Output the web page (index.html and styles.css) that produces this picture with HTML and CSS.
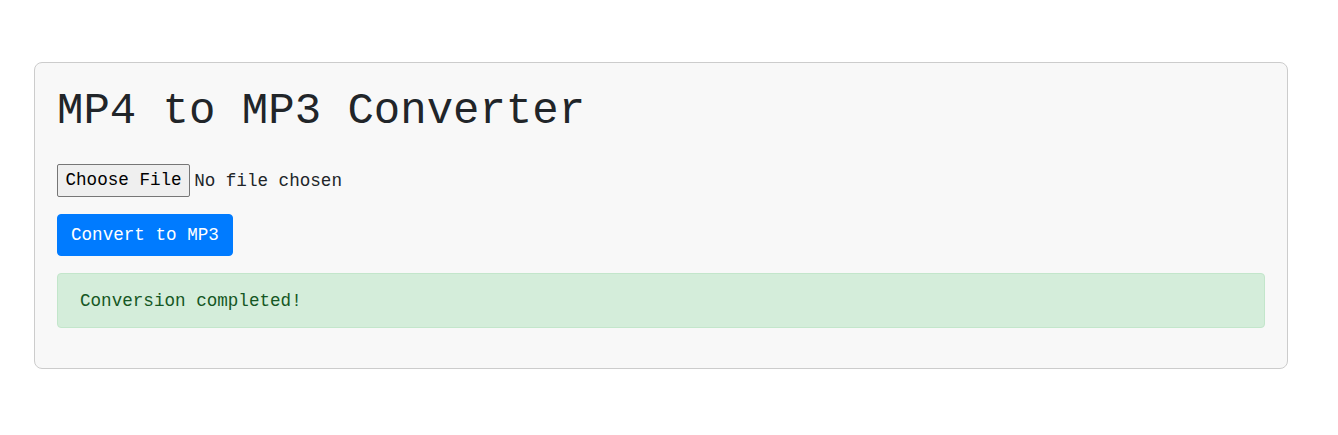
FILE: index.html
```html
<!DOCTYPE html>
<html lang="en">
<head>
<meta charset="utf-8">
<title>MP4 to MP3 Converter</title>
<link rel="stylesheet" href="styles.css">
</head>
<body>
<div class="page">
  <div class="card">
    <h1 class="title">MP4 to MP3 Converter</h1>
    <form class="form">
      <div class="file-row"><input type="file" class="file-input" accept="video/mp4"></div>
      <button type="button" class="btn-primary">Convert to MP3</button>
    </form>
    <div class="alert-success">Conversion completed!</div>
  </div>
</div>
</body>
</html>
```
FILE: styles.css
```css
html, body {
  margin: 0;
  padding: 0;
  background: #ffffff;
}
body {
  font-family: "Liberation Mono", "Courier New", monospace;
  font-size: 17.6px;
  color: #212529;
}
.page {
  padding: 62px 0 0 34px;
}
.card {
  width: 1254px;
  box-sizing: border-box;
  background: #f8f8f8;
  border: 1px solid #cccccc;
  border-radius: 8px;
  padding: 22px 22px 22px 22px;
}
.title {
  font-family: "Liberation Mono", "Courier New", monospace;
  font-weight: 400;
  font-size: 44px;
  line-height: 1.2;
  margin: 0 0 8px 0;
}
.form {
  margin: 0;
}
.file-row {
  padding-top: 18px;
  margin-bottom: 17px;
  height: 33px;
}
.file-input {
  font-family: inherit;
  font-size: 17.6px;
  color: #212529;
}
.file-input::file-selector-button {
  font-family: inherit;
  font-size: 17.6px;
  height: 33px;
  padding: 0 7.5px;
  margin-right: 4px;
  background: #efefef;
  border: 1px solid #767676;
  border-radius: 2px;
  color: #000;
}
.btn-primary {
  display: block;
  height: 42px;
  padding: 0 13px;
  font-family: inherit;
  font-size: 17.6px;
  color: #ffffff;
  background: #007bff;
  border: 1px solid #007bff;
  border-radius: 4px;
}
.alert-success {
  margin-top: 17px;
  margin-bottom: 18px;
  height: 55px;
  box-sizing: border-box;
  display: flex;
  align-items: center;
  padding: 2px 22px 0 22px;
  background: #d4edda;
  border: 1px solid #c3e6cb;
  border-radius: 4px;
  color: #155724;
}
```
